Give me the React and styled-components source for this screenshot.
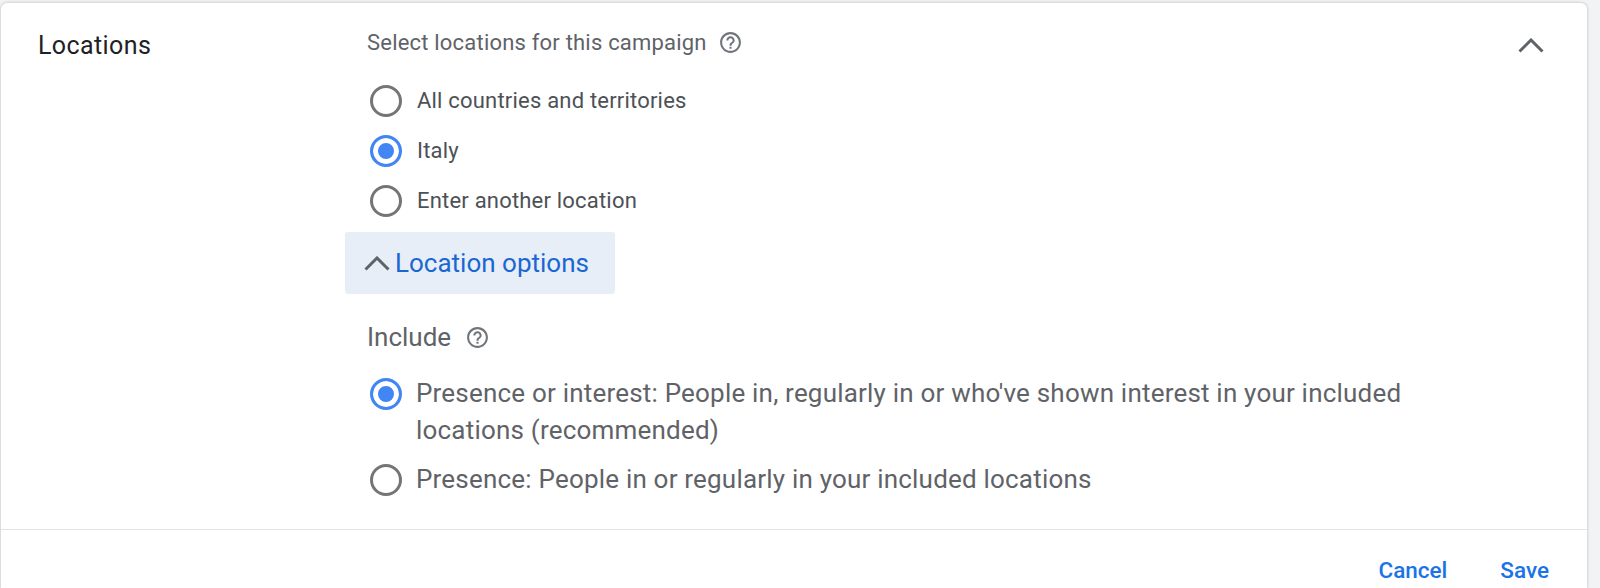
import styled, { createGlobalStyle } from "styled-components";

const GlobalStyle = createGlobalStyle`
  html, body {
    margin: 0;
    height: 100%;
    overflow: hidden;
    background: #f1f3f4;
    font-family: Roboto, "Liberation Sans", sans-serif;
  }
`;

function HelpIcon({ size }) {
  return (
    <svg width={size} height={size} viewBox="0 0 24 24" fill="#70757a">
      <path d="M11 18h2v-2h-2v2zm1-16C6.48 2 2 6.48 2 12s4.48 10 10 10 10-4.48 10-10S17.52 2 12 2zm0 18c-4.41 0-8-3.59-8-8s3.59-8 8-8 8 3.59 8 8-3.59 8-8 8zm0-14c-2.21 0-4 1.79-4 4h2c0-1.1.9-2 2-2s2 .9 2 2c0 2-3 1.75-3 5h2c0-2.25 3-2.5 3-5 0-2.21-1.79-4-4-4z" />
    </svg>
  );
}

function Chevron({ width, height }) {
  return (
    <svg width={width} height={height} viewBox="0 0 26 15" fill="none" stroke="#5f6368" strokeWidth="3">
      <path d="M1.5 13.5L13 2l11.5 11.5" />
    </svg>
  );
}

function Option({ checked, big, children }) {
  return (
    <OptionRow $big={big}>
      <Radio $checked={checked} />
      <OptionText $big={big}>{children}</OptionText>
    </OptionRow>
  );
}

export default function App() {
  return (
    <>
      <GlobalStyle />
      <Card>
        <Body>
          <Title>Locations</Title>
          <Content>
            <Heading>
              Select locations for this campaign
              <HelpIcon size={25} />
            </Heading>
            <Options>
              <Option>All countries and territories</Option>
              <Option checked>Italy</Option>
              <Option>Enter another location</Option>
            </Options>
            <OptionsToggle>
              <Chevron width={26} height={15} />
              <span>Location options</span>
            </OptionsToggle>
            <IncludeLabel>
              Include
              <HelpIcon size={25} />
            </IncludeLabel>
            <IncludeOptions>
              <Option checked big>
                Presence or interest: People in, regularly in or who've shown interest in your included
                <br />
                locations (recommended)
              </Option>
              <Option big>Presence: People in or regularly in your included locations</Option>
            </IncludeOptions>
          </Content>
          <Collapse>
            <Chevron width={26} height={15} />
          </Collapse>
        </Body>
        <Footer>
          <TextButton>Cancel</TextButton>
          <TextButton>Save</TextButton>
        </Footer>
      </Card>
    </>
  );
}

const Card = styled.div`
  box-sizing: border-box;
  width: 1586px;
  height: 585px;
  margin: 3px 0 0 1px;
  background: #fff;
  border-radius: 6px 6px 0 0;
  box-shadow: 0 0 3px rgba(60, 64, 67, 0.35);
  display: flex;
  flex-direction: column;
`;

const Body = styled.div`
  height: 527px;
  box-sizing: border-box;
  border-bottom: 1px solid #e3e4e6;
  display: flex;
  position: relative;
`;

const Title = styled.div`
  width: 344px;
  padding: 26px 0 0 37px;
  box-sizing: border-box;
  font-size: 25px;
  line-height: 34px;
  letter-spacing: 0.4px;
  color: #202124;
`;

const Content = styled.div`
  flex: 1;
  padding-top: 24px;
`;

const Heading = styled.div`
  display: flex;
  align-items: center;
  gap: 11px;
  height: 30px;
  margin-left: 22px;
  font-size: 22px;
  letter-spacing: 0.2px;
  color: #5f6368;
`;

const Options = styled.div`
  margin-top: 28px;
  margin-left: 25px;
  display: flex;
  flex-direction: column;
  gap: 18px;
`;

const OptionRow = styled.div`
  display: flex;
  align-items: flex-start;
  gap: ${(p) => (p.$big ? "14px" : "15px")};
  min-height: 32px;
`;

const Radio = styled.div`
  box-sizing: border-box;
  flex: none;
  width: 32px;
  height: 32px;
  border-radius: 50%;
  border: 3px solid ${(p) => (p.$checked ? "#4285f4" : "#757575")};
  background: ${(p) => (p.$checked ? "#4285f4" : "#fff")};
  box-shadow: ${(p) => (p.$checked ? "inset 0 0 0 5px #fff" : "none")};
`;

const OptionText = styled.div`
  font-size: ${(p) => (p.$big ? "26px" : "22px")};
  line-height: ${(p) => (p.$big ? "37px" : "32px")};
  margin-top: ${(p) => (p.$big ? "-3px" : "0")};
  letter-spacing: 0.2px;
  color: ${(p) => (p.$big ? "#5f6368" : "#4d5156")};
  white-space: nowrap;
`;

const OptionsToggle = styled.div`
  box-sizing: border-box;
  width: 270px;
  height: 62px;
  margin-top: 15px;
  padding-left: 19px;
  background: #e8eef8;
  border-radius: 3px;
  display: flex;
  align-items: center;
  gap: 5px;
  font-size: 26px;
  color: #1a67d2;
`;

const IncludeLabel = styled.div`
  display: flex;
  align-items: center;
  gap: 14px;
  height: 30px;
  margin: 28px 0 0 22px;
  font-size: 26px;
  color: #5f6368;
`;

const IncludeOptions = styled.div`
  margin-top: 26px;
  margin-left: 25px;
  display: flex;
  flex-direction: column;
  gap: 15px;
`;

const Collapse = styled.div`
  position: absolute;
  top: 35px;
  right: 43px;
  line-height: 0;
`;

const Footer = styled.div`
  flex: 1;
  display: flex;
  justify-content: flex-end;
  align-items: center;
  gap: 53px;
  padding: 22px 38px 0 0;
`;

const TextButton = styled.div`
  font-size: 22.5px;
  font-weight: 500;
  color: #1a73e8;
`;
